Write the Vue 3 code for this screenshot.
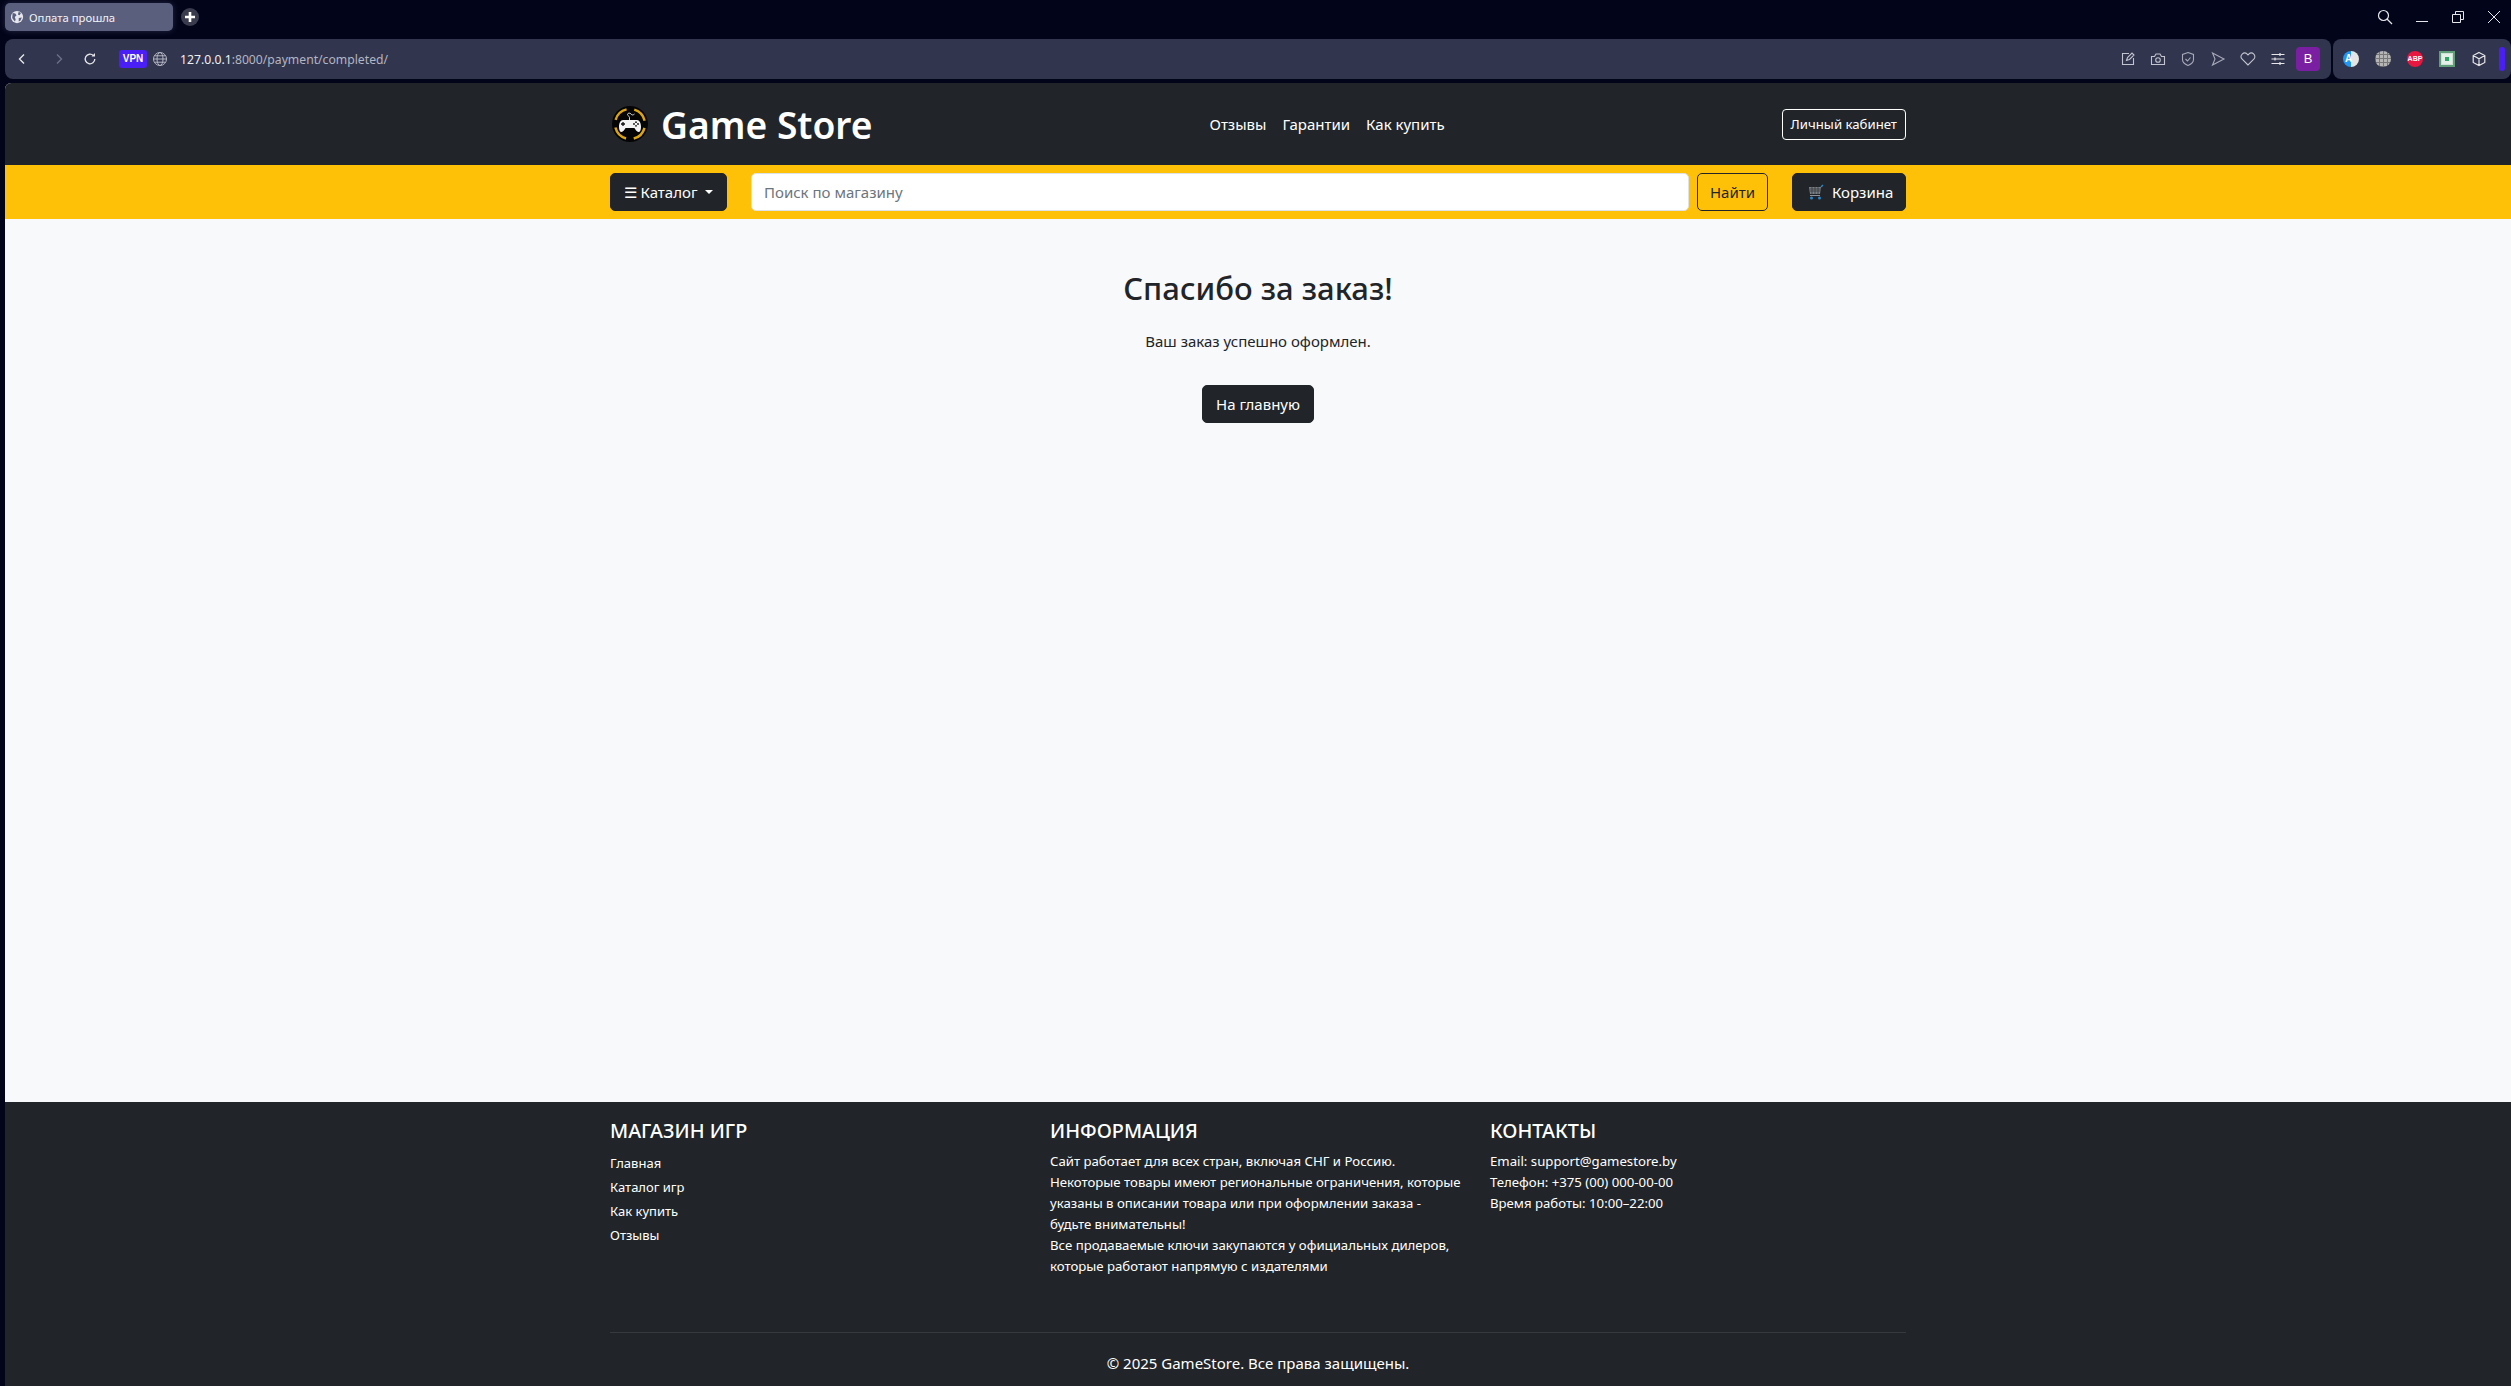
<template>
  <div class="window">
    <div class="tabbar">
      <div class="tab">
        <svg class="tab-icon" viewBox="0 0 16 16">
          <circle cx="8" cy="8" r="7" fill="#e6e7ee" />
          <path d="M3 3.500l3 .5 1.500 2-2 2 1 3-1 2-3-4zM10 2l2.500 1.500L11 6 9 5zM10 9l3.500-.5L12 12l-2 1z" fill="#5a5f7d" />
        </svg>
        <span>Оплата прошла</span>
      </div>
      <div class="new-tab">
        <svg viewBox="0 0 18 18" width="18" height="18"><path d="M9 4v10M4 9h10" stroke="#fff" stroke-width="2.600" /></svg>
      </div>
      <div class="window-controls">
        <svg viewBox="0 0 16 16" width="16" height="16" fill="none" stroke="#e6e6ea" stroke-width="1.200"><circle cx="6.500" cy="6.500" r="5" /><path d="M10 10l5 5" /></svg>
        <svg viewBox="0 0 14 14" width="14" height="14" fill="none" stroke="#e6e6ea"><path d="M1 11.500h12" /></svg>
        <svg viewBox="0 0 14 14" width="14" height="14" fill="none" stroke="#e6e6ea"><path d="M1.500 4.500h8v8h-8zM4.500 4.500v-3h8v8h-3" /></svg>
        <svg viewBox="0 0 14 14" width="14" height="14" fill="none" stroke="#e6e6ea"><path d="M1 1l12 12M13 1L1 13" /></svg>
      </div>
    </div>

    <div class="toolbar">
      <div class="address-bar">
        <div class="nav-buttons">
          <svg viewBox="0 0 12 12" width="12" height="12" fill="none" stroke="#e6e6ea" stroke-width="1.400"><path d="M8 1.500L3.500 6 8 10.500" /></svg>
          <svg viewBox="0 0 12 12" width="12" height="12" fill="none" stroke="#6d7088" stroke-width="1.400"><path d="M4 1.500L8.500 6 4 10.500" /></svg>
          <svg class="reload" viewBox="0 0 14 14" width="14" height="14" fill="none" stroke="#e6e6ea" stroke-width="1.300"><path d="M11.800 7a4.800 4.800 0 1 1-1.500-3.500" /><path d="M12 1v3.500H8.500" fill="#e6e6ea" stroke="none" /></svg>
        </div>
        <span class="vpn">VPN</span>
        <svg class="globe" viewBox="0 0 16 16" width="16" height="16" fill="none" stroke="#b5b7c4"><circle cx="8" cy="8" r="6.500" /><ellipse cx="8" cy="8" rx="3" ry="6.500" /><path d="M1.500 8h13M2.500 4.800h11M2.500 11.200h11" /></svg>
        <div class="url"><b>127.0.0.1</b>:8000/payment/completed/</div>
        <div class="bar-icons">
          <svg viewBox="0 0 16 16" width="16" height="16" fill="none" stroke="#c2c4d0" stroke-width="1.100"><path d="M9 2.500H2.500v11h11V7" /><path d="M6.500 9.500l1-3L12 2l2 2-4.500 4.500z" /></svg>
          <svg viewBox="0 0 16 16" width="16" height="16" fill="none" stroke="#c2c4d0" stroke-width="1.100"><path d="M1.500 5.500h3l1.500-2.500h4l1.500 2.500h3v8h-13z" /><circle cx="8" cy="9" r="2.300" /></svg>
          <svg viewBox="0 0 16 16" width="16" height="16" fill="none" stroke="#a8aaba" stroke-width="1.100"><path d="M8 1.500l5.500 2v5c0 3-3 5-5.500 6-2.500-1-5.500-3-5.500-6v-5z" /><path d="M5.500 8l2 2 3-3.500" /></svg>
          <svg viewBox="0 0 16 16" width="16" height="16" fill="none" stroke="#a8aaba" stroke-width="1.100"><path d="M2.500 2l11.500 6-11.500 6L5 8z" /></svg>
          <svg viewBox="0 0 16 16" width="16" height="16" fill="none" stroke="#c2c4d0" stroke-width="1.100"><path d="M8 14L2.200 8.200a3.500 3.500 0 0 1 5-5L8 4l.8-.8a3.500 3.500 0 0 1 5 5z" /></svg>
          <svg viewBox="0 0 16 16" width="16" height="16" fill="none" stroke="#e6e6ea" stroke-width="1.200"><path d="M1.500 3.500h13M1.500 8h13M1.500 12.500h13M10 2v3M5 6.500v3M10 11v3" /></svg>
          <span class="ext-b">B</span>
        </div>
      </div>
      <div class="ext-bar">
        <span class="ext translate"><i>A</i></span>
        <span class="ext grid-ball"></span>
        <span class="ext abp">ABP</span>
        <span class="ext green-box"><i></i></span>
        <svg viewBox="0 0 16 16" width="16" height="16" fill="none" stroke="#e6e6ea" stroke-width="1.200"><path d="M8 1.500l5.800 3v7L8 14.500l-5.800-3v-7zM2.200 4.500L8 7.800l5.800-3.300M8 7.800v6.700" /></svg>
        <span class="ext-pill"></span>
      </div>
    </div>

    <div class="page">
      <header class="site-header">
        <div class="container header-row">
          <a class="brand">
            <svg class="brand-logo" viewBox="0 0 36 36">
              <circle cx="18" cy="18" r="18" fill="#050505" />
              <circle cx="18" cy="18" r="15" fill="none" stroke="#dca50d" stroke-width="2.500" stroke-dasharray="15.700 7.860" stroke-dashoffset="-3.900" />
              <path d="M17.500 14v-2.500c0-1.500-2-1.500-2-3s2.500-2 3.500-.5 2.500 1 3.500 0" fill="none" stroke="#e8e8e8" stroke-width=".9" />
              <path d="M10 14h15c2.500 0 4 3 4 7 0 3-1 5-2.500 5-1.500 0-3.500-3-4-4h-9c-.5 1-2.500 4-4 4-1.500 0-2.500-2-2.500-5 0-4 1.500-7 4-7z" fill="#f4f4f4" />
              <path d="M11 16v4M9 18h4" stroke="#111" stroke-width="1.300" />
              <circle cx="24" cy="16.200" r=".9" fill="#111" />
              <circle cx="26" cy="18" r=".9" fill="#111" />
              <circle cx="22" cy="18" r=".9" fill="#111" />
              <circle cx="24" cy="19.800" r=".9" fill="#111" />
            </svg>
            <span>Game Store</span>
          </a>
          <nav class="main-nav">
            <a>Отзывы</a>
            <a>Гарантии</a>
            <a>Как купить</a>
          </nav>
          <a class="account-btn">Личный кабинет</a>
        </div>
      </header>

      <div class="search-strip">
        <div class="container strip-row">
          <button class="btn-dark catalog-btn">☰ Каталог<span class="caret"></span></button>
          <input class="search-input" type="text" placeholder="Поиск по магазину" />
          <button class="find-btn">Найти</button>
          <button class="btn-dark cart-btn">
            <svg class="cart-icon" viewBox="0 0 16 16" width="16" height="16">
              <path d="M1 3h12l-1 7H2z" fill="#7a8085" />
              <path d="M2 5h10.500M2 7h10.500M4 3v7M7 3v7M10 3v7" stroke="#2d3135" stroke-width=".7" />
              <path d="M13 3l2-2" stroke="#2b87c9" stroke-width="1.500" />
              <path d="M2 11.500h10" stroke="#8e9499" stroke-width="1" />
              <circle cx="3.500" cy="14" r="1.500" fill="#2b87c9" />
              <circle cx="11.500" cy="14" r="1.500" fill="#2b87c9" />
            </svg>
            Корзина
          </button>
        </div>
      </div>

      <main class="content">
        <h2>Спасибо за заказ!</h2>
        <p>Ваш заказ успешно оформлен.</p>
        <a class="btn-dark home-btn">На главную</a>
      </main>

      <footer class="site-footer">
        <div class="container">
          <div class="footer-cols">
            <div class="footer-col">
              <h5>МАГАЗИН ИГР</h5>
              <ul>
                <li v-for="link in shopLinks" :key="link">{{ link }}</li>
              </ul>
            </div>
            <div class="footer-col">
              <h5>ИНФОРМАЦИЯ</h5>
              <p>
                Сайт работает для всех стран, включая СНГ и Россию.<br />
                Некоторые товары имеют региональные ограничения, которые указаны в описании товара или при оформлении заказа - будьте внимательны!<br />
                Все продаваемые ключи закупаются у официальных дилеров, которые работают напрямую с издателями
              </p>
            </div>
            <div class="footer-col">
              <h5>КОНТАКТЫ</h5>
              <p>
                Email: support@gamestore.by<br />
                Телефон: +375 (00) 000-00-00<br />
                Время работы: 10:00–22:00
              </p>
            </div>
          </div>
          <div class="copyright">© 2025 GameStore. Все права защищены.</div>
        </div>
      </footer>
    </div>
  </div>
</template>

<script setup>
const shopLinks = ["Главная", "Каталог игр", "Как купить", "Отзывы"];
</script>

<style>
html,
body {
  margin: 0;
  background: #02041a;
}
</style>

<style scoped>
.window {
  width: 2511px;
  height: 1386px;
  overflow: hidden;
  display: flex;
  flex-direction: column;
  background: #02041a;
  font-family: "Noto Sans", "Open Sans", sans-serif;
  color: #212529;
  box-sizing: border-box;
}

.tabbar {
  height: 39px;
  display: flex;
  align-items: flex-start;
  padding: 3px 0 0 5px;
  box-sizing: border-box;
  flex-shrink: 0;
}

.tab {
  width: 168px;
  height: 28px;
  background: #5a5f7d;
  border-radius: 5px;
  display: flex;
  align-items: center;
  gap: 5px;
  padding-left: 5px;
  box-sizing: border-box;
  color: #f2f2f6;
  font-size: 11.300px;
  box-shadow: 0 0 6px rgba(120, 125, 160, 0.3);
}

.tab-icon {
  width: 14px;
  height: 14px;
}

.new-tab {
  width: 18px;
  height: 18px;
  margin: 5px 0 0 8px;
  background: #3a3c4e;
  border-radius: 50%;
}

.window-controls {
  margin-left: auto;
  display: flex;
  align-items: center;
  gap: 22px;
  padding: 6px 10px 0 0;
}

.toolbar {
  height: 44px;
  display: flex;
  gap: 2px;
  padding: 0 0 0 5px;
  flex-shrink: 0;
  box-sizing: border-box;
}

.address-bar {
  flex: 1;
  height: 40px;
  background: #31354d;
  border-radius: 8px;
  display: flex;
  align-items: center;
  box-sizing: border-box;
  padding: 0 11px;
}

.nav-buttons {
  display: flex;
  align-items: center;
  gap: 25px;
  width: 103px;
}

.reload {
  margin-left: -7px;
}

.vpn {
  background: #4a1ff5;
  color: #fff;
  font: 700 10px "Liberation Sans", sans-serif;
  width: 28px;
  height: 18px;
  line-height: 18px;
  text-align: center;
  border-radius: 3px;
}

.globe {
  margin-left: 5px;
}

.url {
  margin-left: 12px;
  font-size: 12.200px;
  color: #b4b6c4;
}

.url b {
  font-weight: 400;
  color: #f0f0f4;
}

.bar-icons {
  margin-left: auto;
  display: flex;
  align-items: center;
  gap: 14px;
}

.ext-b {
  width: 24px;
  height: 24px;
  background: #7a1fa2;
  border-radius: 4px;
  color: #fff;
  font: 400 13px "Liberation Sans", sans-serif;
  text-align: center;
  line-height: 24px;
  margin-left: -4px;
}

.ext-bar {
  width: 178px;
  height: 40px;
  background: #31354d;
  border-radius: 8px;
  display: flex;
  align-items: center;
  gap: 16px;
  padding-left: 10px;
  box-sizing: border-box;
  flex-shrink: 0;
}

.ext {
  width: 16px;
  height: 16px;
  display: block;
  flex-shrink: 0;
}

.translate {
  border-radius: 50%;
  background: linear-gradient(90deg, #2196f3 50%, #e4e4e4 50%);
  color: #fff;
  font: 700 10px/16px "Liberation Sans", sans-serif;
  padding-left: 2px;
  box-sizing: border-box;
}

.translate i {
  font-style: normal;
}

.grid-ball {
  border-radius: 50%;
  background:
    repeating-linear-gradient(0deg, #777 0 1px, transparent 1px 4px),
    repeating-linear-gradient(90deg, #777 0 1px, transparent 1px 4px),
    #b5b5b5;
}

.abp {
  border-radius: 50%;
  background: #e8173f;
  color: #fff;
  font: 700 7px/16px "Liberation Sans", sans-serif;
  text-align: center;
}

.green-box {
  background: #5f9e78;
  display: flex;
  align-items: center;
  justify-content: center;
}

.green-box i {
  width: 10px;
  height: 10px;
  border: 3px solid #e4efe8;
  outline: 1px solid #cfe0d6;
  box-sizing: border-box;
  background-color: #2aa866;
}

.ext-pill {
  width: 6px;
  height: 24px;
  border-radius: 3px;
  background: #4a1ff5;
  margin-left: -4px;
}

.page {
  flex: 1;
  margin-left: 5px;
  background: #f8f9fa;
  border-radius: 6px 0 0 0;
  overflow: hidden;
  display: flex;
  flex-direction: column;
  min-height: 0;
}

.container {
  width: 1296px;
  margin: 0 auto;
}

.site-header {
  background: #212529;
  height: 82px;
  flex-shrink: 0;
}

.header-row {
  display: flex;
  align-items: center;
  justify-content: space-between;
  height: 82px;
}

.brand {
  display: flex;
  align-items: center;
  gap: 13px;
  padding-left: 2px;
  color: #fff;
  font-size: 37.200px;
  font-weight: 600;
}

.brand-logo {
  width: 36px;
  height: 36px;
}

.main-nav {
  display: flex;
  gap: 16px;
  color: #fff;
  font-size: 15px;
}

.account-btn {
  border: 1px solid #fff;
  border-radius: 4px;
  color: #fff;
  font-size: 13.200px;
  height: 31px;
  line-height: 29px;
  padding: 0 8px;
  box-sizing: border-box;
}

.search-strip {
  background: #ffc107;
  height: 54px;
  flex-shrink: 0;
}

.strip-row {
  display: flex;
  align-items: center;
  height: 54px;
}

.btn-dark {
  background: #212529;
  border: 1px solid #212529;
  border-radius: 5px;
  color: #fff;
  font-family: inherit;
  font-size: 15px;
  height: 38px;
  box-sizing: border-box;
  display: inline-flex;
  align-items: center;
}

.catalog-btn {
  width: 117px;
  justify-content: center;
  margin-right: 24px;
}

.caret {
  margin-left: 8px;
  border-top: 4px solid #fff;
  border-left: 4px solid transparent;
  border-right: 4px solid transparent;
}

.search-input {
  flex: 1;
  height: 38px;
  border: 1px solid #dee2e6;
  border-radius: 5px;
  padding: 0 12px;
  box-sizing: border-box;
  font-family: inherit;
  font-size: 15px;
  background: #fff;
  outline: none;
}

.search-input::placeholder {
  color: #6c757d;
}

.find-btn {
  width: 71px;
  height: 38px;
  margin: 0 24px 0 8px;
  background: transparent;
  border: 1px solid #212529;
  border-radius: 5px;
  color: #212529;
  font-family: inherit;
  font-size: 15px;
}

.cart-btn {
  width: 114px;
  padding: 0 0 0 15px;
  gap: 8px;
}

.content {
  flex: 1;
  min-height: 0;
  text-align: center;
  padding-top: 50px;
  box-sizing: border-box;
}

.content h2 {
  margin: 0;
  font-size: 31px;
  font-weight: 500;
  line-height: 38px;
  color: #212529;
}

.content p {
  margin: 22px 0 0;
  font-size: 15px;
  line-height: 24px;
}

.home-btn {
  margin-top: 32px;
  padding: 0 13px;
}

.site-footer {
  background: #212529;
  color: #fff;
  height: 284px;
  flex-shrink: 0;
  padding-top: 17px;
  box-sizing: border-box;
}

.footer-cols {
  display: flex;
  height: 213px;
  border-bottom: 1px solid #343a40;
}

.footer-col {
  width: 440px;
  flex-shrink: 0;
  padding-right: 28px;
  box-sizing: border-box;
}

.footer-col h5 {
  margin: 0 0 8px;
  font-size: 19.800px;
  font-weight: 500;
  line-height: 24px;
}

.footer-col p {
  margin: 0;
  font-size: 13.200px;
  line-height: 21px;
}

.footer-col ul {
  list-style: none;
  margin: 0;
  padding: 0;
  font-size: 13px;
  line-height: 24px;
}

.copyright {
  text-align: center;
  font-size: 15px;
  line-height: 24px;
  padding-top: 18px;
}
</style>
